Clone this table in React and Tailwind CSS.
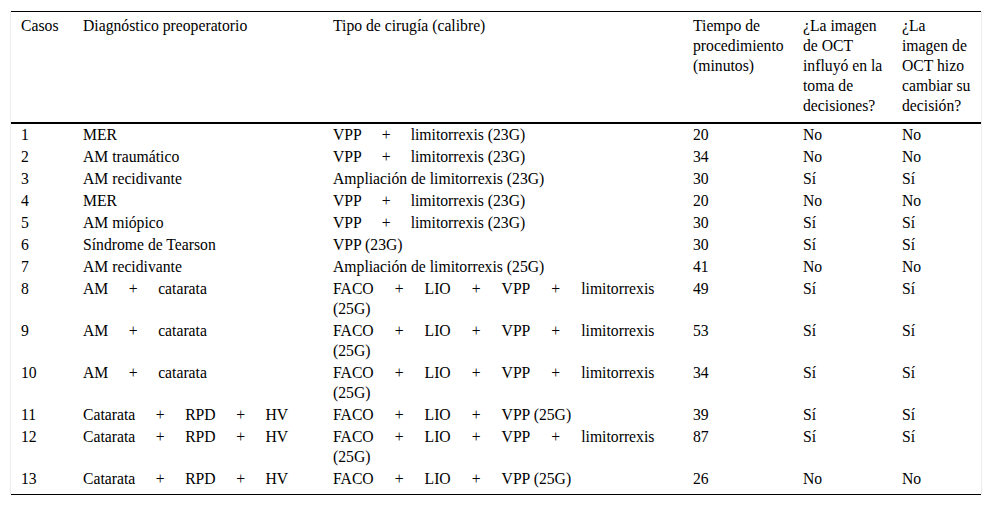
import React from "react";

const P = ({ m = "mx-[21px]" }) => <span className={m}>+</span>;
const D = () => <P m="mx-[20.5px]" />;

const rows = [
  ["1", "MER", <>VPP<P m="mx-[20px]" />limitorrexis (23G)</>, "20", "No", "No"],
  ["2", "AM traumático", <>VPP<P m="mx-[20px]" />limitorrexis (23G)</>, "34", "No", "No"],
  ["3", "AM recidivante", "Ampliación de limitorrexis (23G)", "30", "Sí", "Sí"],
  ["4", "MER", <>VPP<P m="mx-[20px]" />limitorrexis (23G)</>, "20", "No", "No"],
  ["5", "AM miópico", <>VPP<P m="mx-[20px]" />limitorrexis (23G)</>, "30", "Sí", "Sí"],
  ["6", "Síndrome de Tearson", "VPP (23G)", "30", "Sí", "Sí"],
  ["7", "AM recidivante", "Ampliación de limitorrexis (25G)", "41", "No", "No"],
  ["8", <>AM<D />catarata</>, <>FACO<P />LIO<P />VPP<P />limitorrexis (25G)</>, "49", "Sí", "Sí"],
  ["9", <>AM<D />catarata</>, <>FACO<P />LIO<P />VPP<P />limitorrexis (25G)</>, "53", "Sí", "Sí"],
  ["10", <>AM<D />catarata</>, <>FACO<P />LIO<P />VPP<P />limitorrexis (25G)</>, "34", "Sí", "Sí"],
  ["11", <>Catarata<D />RPD<D />HV</>, <>FACO<P />LIO<P />VPP (25G)</>, "39", "Sí", "Sí"],
  ["12", <>Catarata<D />RPD<D />HV</>, <>FACO<P />LIO<P />VPP<P />limitorrexis (25G)</>, "87", "Sí", "Sí"],
  ["13", <>Catarata<D />RPD<D />HV</>, <>FACO<P />LIO<P />VPP (25G)</>, "26", "No", "No"],
];

export default function App() {
  return (
    <div className="bg-white min-h-[507px] pt-[11px] px-[10px] text-black font-['Liberation_Serif','Times_New_Roman',serif]">
      <div className="border-x border-[#ececec]">
        <table className="w-full table-fixed border-collapse text-[15.7px] leading-[20px]">
          <colgroup>
            <col className="w-[62px]" />
            <col className="w-[250px]" />
            <col className="w-[360px]" />
            <col className="w-[110px]" />
            <col className="w-[99px]" />
            <col />
          </colgroup>
          <thead>
            <tr className="border-t border-b-2 border-black align-top text-left">
              {[
                "Casos",
                "Diagnóstico preoperatorio",
                "Tipo de cirugía (calibre)",
                "Tiempo de procedimiento (minutos)",
                "¿La imagen de OCT influyó en la toma de decisiones?",
                "¿La imagen de OCT hizo cambiar su decisión?",
              ].map((h, i) => (
                <th key={i} className="font-normal pl-[10px] pr-[7px] pt-[4px] pb-[6px]">
                  {h}
                </th>
              ))}
            </tr>
          </thead>
          <tbody className="border-b border-black">
            {rows.map((r, i) => (
              <tr key={i} className="align-top">
                {r.map((c, j) => (
                  <td key={j} className={"pl-[10px] pr-[7px] pt-px " + (i === rows.length - 1 ? "pb-[5px]" : "pb-px")}>
                    {c}
                  </td>
                ))}
              </tr>
            ))}
          </tbody>
        </table>
      </div>
    </div>
  );
}
